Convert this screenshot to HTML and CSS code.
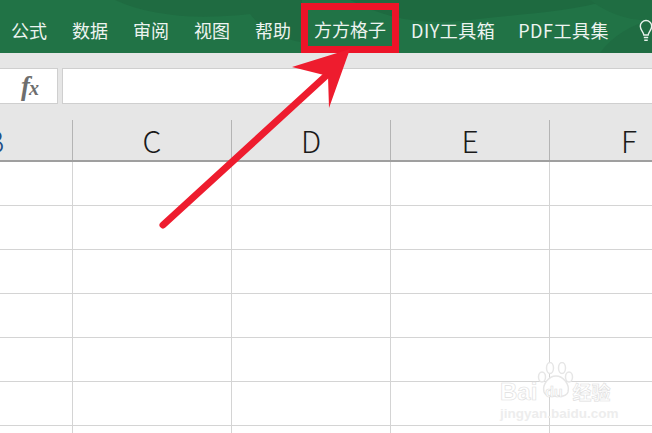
FILE: index.html
```html
<!DOCTYPE html>
<html lang="zh-CN">
<head>
  <meta charset="UTF-8">
  <title>方方格子</title>
  <link rel="stylesheet" href="styles.css">
</head>
<body>
  <div class="app-wrap">
    <div class="ribbon">
      <svg class="ribbon-bg" width="652" height="53" viewBox="0 0 652 53">
        <path d="M115 0C150 16 195 20 250 14C262 30 280 38 300 42L302 0Z" fill="#1f6b41"/>
        <path d="M350 0C385 18 420 26 470 20C520 14 570 12 610 0Z" fill="#1e6a40"/>
        <path d="M590 0C605 12 630 22 652 20V0Z" fill="#1f6d42"/>
        <path d="M600 53C612 36 632 24 652 20V53Z" fill="#1f6c42"/>
      </svg>
      <a class="tab">公式</a>
      <a class="tab">数据</a>
      <a class="tab">审阅</a>
      <a class="tab">视图</a>
      <a class="tab">帮助</a>
      <a class="tab active">方方格子</a>
      <a class="tab wide">DIY工具箱</a>
      <a class="tab wide">PDF工具集</a>
      <svg class="bulb" width="14" height="26" viewBox="0 0 16 28">
        <path d="M5.500 18.500C5 14.500 1.500 13 1.500 8.500A6.500 6.500 0 0 1 14.500 8.500C14.500 13 11 14.500 10.500 18.500Z" fill="none" stroke="#e8f1ec" stroke-width="1.600"/>
        <path d="M5.500 21.500H10.500M6 24.500H10" stroke="#e8f1ec" stroke-width="1.800"/>
      </svg>
    </div>

    <div class="formula-bar">
      <div class="name-end"><span class="fx">f<span class="fx-x">x</span></span></div>
      <div class="formula-input"></div>
    </div>

    <div class="col-headers">
      <div class="col-head cut"><span class="cut-b">B</span></div>
      <div class="col-head">C</div>
      <div class="col-head">D</div>
      <div class="col-head">E</div>
      <div class="col-head">F</div>
    </div>

    <div class="sheet">
      <div class="row"><i></i><i></i><i></i><i></i><i></i></div>
      <div class="row"><i></i><i></i><i></i><i></i><i></i></div>
      <div class="row"><i></i><i></i><i></i><i></i><i></i></div>
      <div class="row"><i></i><i></i><i></i><i></i><i></i></div>
      <div class="row"><i></i><i></i><i></i><i></i><i></i></div>
      <div class="row"><i></i><i></i><i></i><i></i><i></i></div>
      <div class="row"><i></i><i></i><i></i><i></i><i></i></div>
    </div>

    <!-- red arrow drawn on top of the screenshot -->
    <svg class="arrow" width="652" height="433" viewBox="0 0 652 433">
      <path d="M163 225L328 74" stroke="#ee1c2e" stroke-width="7" stroke-linecap="round" fill="none"/>
      <path d="M350 49L329 108L328 76L292 67Z" fill="#ee1c2e"/>
    </svg>

    <div class="watermark">
      <svg class="paw" width="38" height="38" viewBox="0 0 38 38">
        <ellipse cx="5" cy="15" rx="3.500" ry="5" />
        <ellipse cx="13" cy="6" rx="3.500" ry="5.500" />
        <ellipse cx="25" cy="6" rx="3.500" ry="5.500" />
        <ellipse cx="32" cy="15" rx="3.500" ry="5" />
        <path d="M19 14C26 14 33 22 31 30C29 36 22 34 19 34C16 34 9 36 7 30C5 22 12 14 19 14Z" />
      </svg>
      <div class="wm-top"><span>Bai</span><span class="wm-du">du</span><span class="wm-cn">经验</span></div>
      <div class="wm-url">jingyan.baidu.com</div>
    </div>
  </div>
</body>
</html>
```

FILE: styles.css
```css
* {
  margin: 0;
  padding: 0;
  box-sizing: border-box;
}

body {
  font-family: "Liberation Sans", "Noto Sans CJK SC", sans-serif;
  background: #fff;
  overflow: hidden;
}

.app-wrap {
  position: relative;
  width: 652px;
  height: 433px;
  overflow: hidden;
}

/* ribbon */
.ribbon {
  position: relative;
  height: 53px;
  padding-left: 11px;
  display: flex;
  align-items: center;
  background: #217346;
}

.ribbon-bg {
  position: absolute;
  left: 0;
  top: 0;
}

.tab {
  position: relative;
  flex: none;
  margin-right: 25px;
  padding-top: 6px;
  color: #edf4f0;
  font-family: "Noto Sans CJK SC", sans-serif;
  font-size: 18px;
  line-height: 34px;
  white-space: nowrap;
}

.tab.wide {
  margin-right: 23px;
  letter-spacing: 0.5px;
}

.tab.active {
  height: 50px;
  margin: 3px 12px 0 -15px;
  padding: 0 6px;
  border: 7px solid #ec1428;
  line-height: 39px;
}

.bulb {
  position: relative;
  flex: none;
  margin-left: 7px;
  margin-top: 9px;
}

/* formula bar */
.formula-bar {
  height: 67px;
  padding: 15px 0 16px;
  display: flex;
  gap: 4px;
  background: #e6e6e6;
}

.name-end {
  width: 58px;
  display: flex;
  align-items: center;
  justify-content: flex-end;
  padding-right: 19px;
  background: #fff;
  border: 1px solid #cfcfcf;
  border-left: 0;
}

.fx {
  color: #6e6e6e;
  font-family: "Liberation Serif", serif;
  font-size: 27px;
  font-style: italic;
  font-weight: 700;
  letter-spacing: -1px;
}

.fx-x {
  font-size: 20px;
}

.formula-input {
  flex: 1;
  background: #fff;
  border: 1px solid #cfcfcf;
  border-right: 0;
}

/* column headers */
.col-headers {
  height: 42px;
  display: flex;
  background: #e6e6e6;
  border-bottom: 2px solid #9f9f9f;
}

.col-head {
  flex: none;
  width: 159px;
  padding-bottom: 1px;
  display: flex;
  align-items: center;
  justify-content: center;
  color: #1a1a1a;
  font-family: "Noto Sans CJK SC", sans-serif;
  font-size: 30px;
  font-weight: 300;
  border-right: 1px solid #b4b4b4;
}

.col-head.cut {
  width: 73px;
  justify-content: flex-start;
  overflow: hidden;
}

.cut-b {
  margin-left: -15px;
  color: #1f4f86;
}

/* grid */
.row {
  height: 44px;
  display: flex;
  border-bottom: 1px solid #d4d4d4;
}

.row i {
  flex: none;
  width: 159px;
  border-right: 1px solid #d4d4d4;
}

.row i:first-child {
  width: 73px;
}

/* overlays */
.arrow {
  position: absolute;
  left: 0;
  top: 0;
}

.watermark {
  position: absolute;
  left: 500px;
  top: 362px;
  width: 118px;
  color: #ededed;
}

.paw {
  position: absolute;
  left: 37px;
  top: 0;
  fill: #fff;
  stroke: #e6e6e6;
  stroke-width: 1.500;
}

.wm-top {
  position: relative;
  margin-top: 19px;
  display: flex;
  align-items: center;
  color: #fff;
  font-size: 24px;
  font-weight: 700;
  line-height: 22px;
  -webkit-text-stroke: 0.6px #dedede;
}

.wm-du {
  margin-left: 8px;
  font-size: 14px;
}

.wm-cn {
  margin-left: 10px;
  font-family: "Noto Sans CJK SC", sans-serif;
  font-size: 19px;
}

.wm-url {
  position: relative;
  margin-top: 3px;
  font-size: 13.500px;
  font-weight: 700;
  line-height: 16px;
  white-space: nowrap;
}
```
